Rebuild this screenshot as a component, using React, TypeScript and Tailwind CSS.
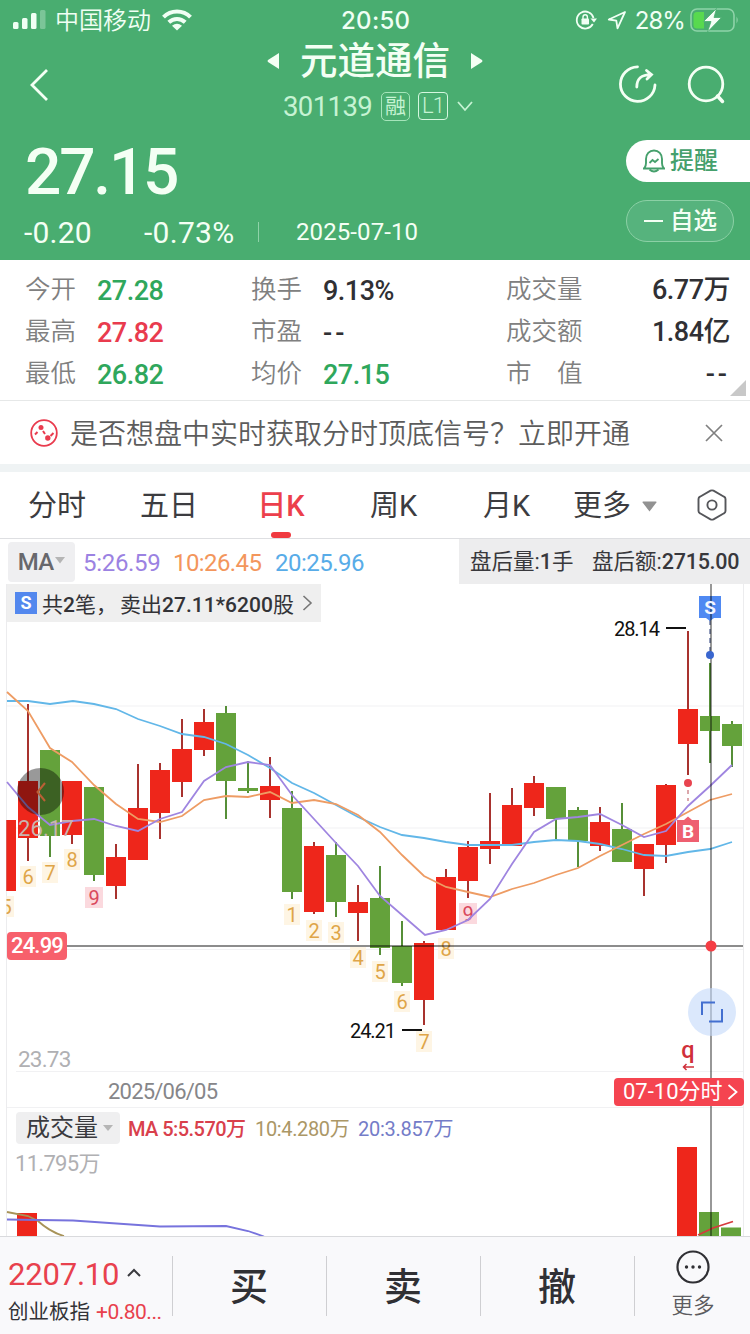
import { useState } from 'react';
import { clsx } from 'clsx';

type Candle = {
  x: number;
  top: number;
  bottom: number;
  high: number;
  low: number;
  up: boolean;
};

const UP = '#ee261b';
const DOWN = '#64a23b';

const candle = (
  x: number,
  top: number,
  bottom: number,
  high: number,
  low: number,
  up: boolean
): Candle => ({ x, top, bottom, high, low, up });

const candles: Candle[] = [
  candle(6, 820, 891, 820, 891, true),
  candle(28, 781, 838, 704, 861, true),
  candle(50, 750, 836, 750, 857, false),
  candle(72, 781, 835, 781, 844, true),
  candle(94, 787, 875, 787, 881, false),
  candle(116, 857, 886, 844, 899, true),
  candle(138, 808, 860, 764, 860, true),
  candle(160, 770, 813, 763, 839, true),
  candle(182, 749, 782, 719, 797, true),
  candle(204, 722, 750, 709, 756, true),
  candle(226, 713, 781, 706, 819, false),
  candle(248, 788, 791, 761, 793, false),
  candle(270, 786, 800, 757, 818, true),
  candle(292, 808, 892, 791, 899, false),
  candle(314, 846, 912, 842, 914, true),
  candle(336, 855, 902, 842, 917, false),
  candle(358, 902, 913, 885, 941, true),
  candle(380, 898, 948, 866, 955, false),
  candle(402, 946, 983, 921, 986, false),
  candle(424, 943, 1000, 941, 1025, true),
  candle(446, 877, 930, 869, 930, true),
  candle(468, 847, 881, 841, 898, true),
  candle(490, 841, 849, 793, 864, true),
  candle(512, 805, 846, 788, 846, true),
  candle(534, 783, 808, 776, 816, true),
  candle(556, 787, 819, 787, 839, false),
  candle(578, 810, 841, 807, 867, false),
  candle(600, 822, 846, 807, 851, true),
  candle(622, 829, 862, 803, 862, false),
  candle(644, 844, 869, 844, 896, true),
  candle(666, 785, 845, 784, 863, true),
  candle(688, 709, 744, 631, 775, true),
  candle(710, 716, 731, 663, 763, false),
  candle(732, 724, 746, 721, 767, false),
];

const ma5 =
  '7,782 28,807 50,825 72,821 94,819 116,826 138,831 160,819 182,812 204,781 226,767 248,762 270,765 292,795 314,819 336,843 358,866 380,896 402,915 425,935 446,930 468,920 490,899 512,864 534,832 556,819 578,817 600,814 622,825 644,837 666,831 688,806 710,786 732,765';
const ma10 =
  '7,692 28,711 50,748 72,762 94,785 116,804 138,819 160,822 182,816 204,800 226,796 248,797 270,792 292,803 314,800 336,804 358,815 380,832 402,855 424,876 446,887 468,892 490,897 512,889 534,883 556,875 578,868 600,856 622,845 644,834 666,824 688,812 710,800 732,794';
const ma20 =
  '7,701 28,701 50,704 73,701 94,704 116,709 138,719 160,726 182,734 204,737 226,744 248,755 270,768 292,783 314,793 336,805 358,817 380,827 402,835 424,838 446,842 468,845 490,845 512,845 534,842 556,840 578,841 600,844 622,849 644,855 666,856 688,852 710,849 732,842';

// nine-turn sequence marks under the candles
const turns = [
  { x: 6, y: 907, n: 5 },
  { x: 28, y: 877, n: 6 },
  { x: 50, y: 873, n: 7 },
  { x: 72, y: 860, n: 8 },
  { x: 94, y: 898, n: 9 },
  { x: 292, y: 915, n: 1 },
  { x: 314, y: 931, n: 2 },
  { x: 336, y: 933, n: 3 },
  { x: 358, y: 958, n: 4 },
  { x: 380, y: 972, n: 5 },
  { x: 402, y: 1002, n: 6 },
  { x: 424, y: 1042, n: 7 },
  { x: 446, y: 949, n: 8 },
  { x: 468, y: 914, n: 9 },
];

const tabs = [
  { label: '分时', width: 'w-[114px]' },
  { label: '五日', width: 'w-[110px]' },
  { label: '日K', width: 'w-[114px]' },
  { label: '周K', width: 'w-[111px]' },
  { label: '月K', width: 'w-[115px]' },
];

function StatusBar() {
  return (
    <div className="relative flex h-10 items-center px-3 font-['Inter','Noto_Sans_CJK_SC',sans-serif] text-[#f0fff4]">
      <svg width="34" height="20" viewBox="0 0 34 20" fill="currentColor">
        <rect x="1" y="12" width="5.500" height="7" rx="1.500" />
        <rect x="10" y="8" width="5.500" height="11" rx="1.500" />
        <rect x="19" y="3" width="5.500" height="16" rx="1.500" />
        <rect x="28" y="0" width="5.500" height="19" rx="1.500" opacity="0.300" />
      </svg>
      <span className="relative top-px ml-[9px] text-2xl font-[350]">中国移动</span>
      <svg className="ml-[10px]" width="32" height="24" viewBox="0 0 32 24" fill="none" stroke="currentColor" strokeWidth="4">
        <path d="M2.500 9.200C10 1.600 22 1.600 29.500 9.200" />
        <path d="M7.800 14.300C12.500 9.800 19.500 9.800 24.200 14.300" />
        <path d="M11 17.800Q16 13.500 21 17.800L16 22.500Z" fill="currentColor" stroke="none" />
      </svg>
      <span className="absolute left-[341px] top-[6px] text-[24px] leading-[29px] font-medium tracking-[0.300px]">20:50</span>
      <div className="ml-auto flex translate-x-[2px] items-center">
        <svg width="22" height="22" viewBox="0 0 22 22" fill="none" stroke="currentColor" strokeWidth="1.800">
          <path d="M17.800 15A8.500 8.500 0 1 1 18.500 9" />
          <path d="M15.500 9.500H22L19 13.500Z" fill="currentColor" stroke="none" />
          <rect x="6.500" y="9.500" width="7.500" height="6" rx="0.800" fill="currentColor" stroke="none" />
          <path d="M8 10V8a2.200 2.200 0 0 1 4.400 0v2" strokeWidth="1.400" />
        </svg>
        <svg className="ml-[10px]" width="20" height="20" viewBox="0 0 20 20" fill="none" stroke="currentColor" strokeWidth="1.800" strokeLinejoin="round">
          <path d="M18 2L1.800 9.500L9.300 10.700L10.500 18.300Z" />
        </svg>
        <span className="relative top-px ml-2 text-[24px] font-normal tracking-[-0.900px]">28%</span>
        <svg className="ml-[5px]" width="50" height="26" viewBox="0 0 50 26">
          <rect x="1" y="2" width="43" height="22" rx="6" fill="none" stroke="#8fd3a9" strokeWidth="1.600" />
          <path d="M7 5H14V21.500H7Q3.500 21.500 3.500 18V8.500Q3.500 5 7 5Z" fill="#58d94f" />
          <path d="M46.500 9.500Q49 13 46.500 16.500Z" fill="#8fd3a9" />
          <path d="M26.500 1.500L13.500 14.500H21L17.500 25L31.500 10.500H24Z" fill="#f5fff7" stroke="#49ad70" strokeWidth="0.800" />
        </svg>
      </div>
    </div>
  );
}

function Header() {
  return (
    <header className="h-[260px] bg-[#49ad70] text-[#f4fff4]">
      <StatusBar />
      <div className="flex h-[88px] items-start">
        <svg className="mt-[28px] ml-[28px]" width="22" height="34" viewBox="0 0 22 34" fill="none" stroke="currentColor" strokeWidth="2.800">
          <path d="M19 2L4 17L19 32" />
        </svg>
        <div className="ml-[210px] w-[230px]">
          <div className="flex h-[42px] items-center justify-center">
            <svg width="13" height="18" viewBox="0 0 13 18" fill="currentColor">
              <path d="M12 1V17L1 10Q0 9 1 8Z" />
            </svg>
            <h1 className="mx-[20px] text-[37.500px] leading-[42px] font-medium whitespace-nowrap">元道通信</h1>
            <svg width="13" height="18" viewBox="0 0 13 18" fill="currentColor">
              <path d="M1 1V17L12 10Q13 9 12 8Z" />
            </svg>
          </div>
          <div className="mt-[8px] ml-[23px] flex h-8 items-center text-[#c6f3d3]">
            <span className="relative top-px w-[89px] text-[27.500px] tracking-[-0.600px]">301139</span>
            <span className="ml-[9px] grid size-[29px] place-items-center rounded-[5px] border-[1.500px] border-[#a5e5ba] text-[21px] leading-none">
              融
            </span>
            <span className="ml-2 grid h-[28px] w-[30px] place-items-center rounded-[4px] border border-[#d5f7df] text-[22px] leading-none font-light tracking-[-1px]">
              L1
            </span>
            <svg className="ml-[8px]" width="18" height="12" viewBox="0 0 18 12" fill="none" stroke="currentColor" strokeWidth="1.800">
              <path d="M2 2L9 10L16 2" />
            </svg>
          </div>
        </div>
        <svg className="mt-[24px] ml-[128px]" width="42" height="42" viewBox="0 0 42 42" fill="none" stroke="currentColor" strokeWidth="2.800" strokeLinecap="round">
          <path d="M19.500 2.800A17.300 17.300 0 1 0 37 21" />
          <path d="M18.800 23C18.800 14.500 23 10.800 33 10.600M28.500 6.500L33.500 10.600L29 15" />
        </svg>
        <svg className="mt-[25px] ml-[27px]" width="40" height="42" viewBox="0 0 40 42" fill="none" stroke="currentColor" strokeWidth="2.800" strokeLinecap="round">
          <circle cx="19" cy="19" r="16.800" />
          <path d="M30.500 31L35.500 36.500" strokeWidth="3.500" />
        </svg>
      </div>
      <div className="flex justify-between">
        <div>
          <div className="mt-[15px] ml-[25px] h-[60px] text-[64px] leading-[60px] font-medium tracking-[-2.200px]">27.15</div>
          <div className="mt-[13px] flex h-8 items-center text-[30px]">
            <span className="ml-[24px] w-[120px] tracking-[0.200px]">-0.20</span>
            <span className="w-[114px] tracking-[0.300px]">-0.73%</span>
            <i className="h-5 w-px bg-[#8fd3a9]" />
            <span className="ml-[37px] text-2xl tracking-[0.100px]">2025-07-10</span>
          </div>
        </div>
        <div className="mt-[12px] w-[124px] text-2xl">
          <div className="flex h-[42px] items-center rounded-l-full bg-white pl-[16px] font-medium text-[#45a06c]">
            <svg width="24" height="24" viewBox="0 0 24 24" fill="none" stroke="currentColor" strokeWidth="1.900">
              <path d="M1 19.500H23M2.500 19Q4 17 4 14V10C4 5 7.300 1.500 12 1.500S20 5 20 10V14Q20 17 21.500 19" />
              <path d="M7.500 20.500Q12 24.500 16.500 20.500" />
              <path d="M7.500 14L10.500 11L13 13L16.500 10" strokeWidth="1.800" />
            </svg>
            <span className="ml-[4px]">提醒</span>
          </div>
          <div className="mt-[18px] flex h-[42px] w-[108px] items-center rounded-full border border-[#8bd0a5] bg-[#56b37d] pl-[17px] font-medium">
            <i className="h-[2px] w-[19px] bg-current" />
            <span className="relative top-px ml-[7px] text-[23.500px]">自选</span>
          </div>
        </div>
      </div>
    </header>
  );
}

interface StatProps {
  label: string;
  value: string;
  tone?: string;
}

// "--" stands for a missing value and is set wider than the digits
const spacing = (value: string) => (value === '--' ? 'tracking-[3px]' : 'tracking-[-0.500px]');

function Stat({ label, value, tone = 'text-[#303034]' }: StatProps) {
  return (
    <div className="flex h-[42px] items-center">
      <span className="w-[72px] text-[25.500px] font-[350] whitespace-pre text-[#808080]">{label}</span>
      <span className={clsx('relative top-px text-[27px] font-medium', spacing(value), tone)}>{value}</span>
    </div>
  );
}

function WideStat({ label, value }: StatProps) {
  return (
    <div className="flex h-[42px] items-center justify-between">
      <span className="text-[25.500px] font-[350] whitespace-pre text-[#808080]">{label}</span>
      <span className={clsx('text-[27px] font-medium text-[#303034]', spacing(value))}>{value}</span>
    </div>
  );
}

function Stats() {
  return (
    <section className="relative flex h-[141px] border-b border-[#e6e8e8] pt-[9px] leading-none">
      <div className="ml-[25px] w-[226px]">
        <Stat label="今开" value="27.28" tone="text-[#2fa75c]" />
        <Stat label="最高" value="27.82" tone="text-[#e93b4e]" />
        <Stat label="最低" value="26.82" tone="text-[#2fa75c]" />
      </div>
      <div className="w-[255px]">
        <Stat label="换手" value="9.13%" />
        <Stat label="市盈" value="--" />
        <Stat label="均价" value="27.15" tone="text-[#2fa75c]" />
      </div>
      <div className="w-[224px]">
        <WideStat label="成交量" value="6.77万" />
        <WideStat label="成交额" value="1.84亿" />
        <WideStat label="市　值" value="--" />
      </div>
      <svg className="absolute right-[4px] bottom-[4px]" width="16" height="16" viewBox="0 0 16 16">
        <path d="M16 0V16H0Z" fill="#c8c8c8" />
      </svg>
    </section>
  );
}

function Banner() {
  return (
    <section className="flex h-[63px] items-center text-[#5c5c5c]">
      <svg className="ml-[30px]" width="28" height="28" viewBox="0 0 28 28" fill="none" stroke="#e93b4e" strokeWidth="1.800">
        <circle cx="14" cy="14" r="12.800" />
        <path d="M5 15.500L7.500 13M13 12L15 15M20.500 17L23.500 14" strokeWidth="2" />
        <circle cx="11" cy="8.500" r="2.500" fill="#e93b4e" stroke="none" />
        <circle cx="17.800" cy="19" r="2.700" fill="#e93b4e" stroke="none" />
      </svg>
      <span className="relative top-[2px] ml-[12px] text-[28px] leading-none font-[350] whitespace-nowrap">
        是否想盘中实时获取分时顶底信号？立即开通
      </span>
      <svg className="mr-[27px] ml-auto" width="18" height="18" viewBox="0 0 18 18" stroke="#808080" strokeWidth="1.700">
        <path d="M1 1L17 17M17 1L1 17" />
      </svg>
    </section>
  );
}

function Tabs() {
  const [active, setActive] = useState('日K');
  return (
    <nav className="flex h-[67px] items-stretch border-b border-[#dedfe2] text-[29px] leading-none text-[#3c3c40]">
      {tabs.map(({ label, width }) => (
        <button
          key={label}
          onClick={() => setActive(label)}
          className={clsx('relative flex items-center justify-center pt-[3px]', width, active === label && 'font-medium text-[#ec3f4c]')}
        >
          {label}
          {active === label && <i className="absolute bottom-0 h-[6px] w-5 rounded-full bg-[#f03a40]" />}
        </button>
      ))}
      <button className="ml-[9px] flex items-center pt-[3px]">
        更多
        <svg className="ml-[11px]" width="15" height="11" viewBox="0 0 15 11" fill="#929292">
          <path d="M1 0.500H14Q15 1 14 2L7.500 10.500L1 2Q0 1 1 0.500Z" />
        </svg>
      </button>
      <svg className="mr-[23px] ml-auto self-center" width="30" height="32" viewBox="0 0 30 32" fill="none" stroke="#55565a" strokeWidth="1.900">
        <path d="M13.500 1.700Q15 1 16.500 1.700L27 7.700Q28.500 8.500 28.500 10V22Q28.500 23.500 27 24.300L16.500 30.300Q15 31 13.500 30.300L3 24.300Q1.500 23.500 1.500 22V10Q1.500 8.500 3 7.700Z" />
        <circle cx="15" cy="16" r="4.600" />
      </svg>
    </nav>
  );
}

function Averages() {
  return (
    <div className="flex h-[45px] items-center text-2xl leading-none">
      <button className="ml-2 flex h-[40px] w-[67px] items-center justify-center rounded-[4px] bg-[#efeff1] font-medium tracking-[-0.800px] text-[#68686c]">
        MA
        <svg className="mb-[3px] ml-[2px]" width="10" height="7" viewBox="0 0 10 7" fill="#b5b5b5">
          <path d="M0 0H10L5 6.500Z" />
        </svg>
      </button>
      <span className="relative top-px ml-[8px] w-[90px] tracking-[-0.300px] text-[#9b82e2]">5:26.59</span>
      <span className="relative top-px w-[102px] tracking-[-0.600px] text-[#f3965c]">10:26.45</span>
      <span className="relative top-px tracking-[-0.500px] text-[#58ace8]">20:25.96</span>
      <div className="ml-auto flex h-[45px] w-[291px] items-center bg-[#ededee] text-[21.500px] whitespace-pre text-[#38383c]">
        <span className="ml-[11px] w-[122px]">
          盘后量:<span className="font-medium">1</span>手
        </span>
        <span>
          盘后额:<span className="font-medium tracking-[-0.250px]">2715.00</span>
        </span>
      </div>
    </div>
  );
}

function KLineChart() {
  return (
    <section className="relative h-[524px]">
      <svg
        className="block font-['Roboto','Noto_Sans_CJK_SC',sans-serif]"
        width="750"
        height="524"
        viewBox="0 584 750 524"
        fill="none"
      >
        <defs>
          <clipPath id="plot">
            <rect x="6.500" y="584" width="737" height="524" />
          </clipPath>
        </defs>
        <path d="M6.500 584V1108M743.500 584V1108" stroke="#ececee" />
        <path d="M7 706H743M7 828H743M7 949.500H743M16 1071.500H743M7 1107.500H743" stroke="#f1f1f3" />
        <g clipPath="url(#plot)">
          {candles.map((c) => (
            <g key={c.x}>
              <rect x={c.x - 1} y={c.high} width="2" height={c.low - c.high} fill={c.up ? '#a8322e' : '#568f38'} />
              <rect x={c.x - 10} y={c.top} width="20" height={c.bottom - c.top} fill={c.up ? UP : DOWN} />
            </g>
          ))}
          {turns.map((t) => (
            <g key={t.x}>
              <rect x={t.x - (t.n === 9 ? 9 : 8)} y={t.y - 11} width={t.n === 9 ? 18 : 16} height="21" fill={t.n === 9 ? '#fbd9de' : '#fef5e4'} />
              <text x={t.x} y={t.y + 7} textAnchor="middle" fontSize="20" fill={t.n === 9 ? '#d9485c' : '#dfa548'}>
                {t.n}
              </text>
            </g>
          ))}
        </g>
        <polyline points={ma20} stroke="#62b7e8" strokeWidth="1.800" />
        <polyline points={ma10} stroke="#ee9c64" strokeWidth="1.800" />
        <polyline points={ma5} stroke="#9f85e0" strokeWidth="1.800" />
        <text x="18" y="1067" fontSize="22.500" letterSpacing="-0.800" fill="#b0b0b3">23.73</text>
        <text x="108" y="1099" fontSize="22" fill="#868689" textLength="110">2025/06/05</text>

        {/* extremes */}
        <text x="614" y="636" fontSize="20" fill="#111" textLength="46">28.14</text>
        <path d="M666 628H686" stroke="#111" strokeWidth="2" />
        <text x="350" y="1038" fontSize="20" fill="#111" textLength="46">24.21</text>
        <path d="M402 1030H422" stroke="#111" strokeWidth="2" />

        {/* buy and sell marks */}
        <path d="M710 620V652" stroke="#6f7ea6" strokeWidth="1.500" strokeDasharray="5 4" />
        <path d="M688 790V801" stroke="#d08a90" strokeWidth="1.500" strokeDasharray="4 4" />
        <circle cx="688" cy="783" r="4" fill="#e8444f" />
        <path d="M699 596H721V618H714L710 621L706 618H699Z" fill="#4f89f2" />
        <path d="M677 820H684L688 816.500L692 820H699V842H677Z" fill="#ee5f70" />
        <text x="688" y="838" textAnchor="middle" fontSize="19" fontWeight="700" fill="#fff">B</text>

        {/* crosshair */}
        <path d="M67 946H743M711 584V1108" stroke="#000" strokeOpacity="0.450" strokeWidth="1.800" />
        <text x="710" y="614" textAnchor="middle" fontSize="19" fontWeight="700" fill="#f3f6ff">S</text>
        <circle cx="710" cy="655" r="4" fill="#3a66cf" />
        <circle cx="711" cy="946" r="5.500" fill="#f53d44" />
        <text x="688" y="1058" textAnchor="middle" fontSize="23.500" fontWeight="500" fill="#d0303a">q</text>
        <path d="M694 1067H683M686.500 1064L683.500 1067L686.500 1070" stroke="#d0303a" strokeWidth="1.500" />
      </svg>

      <div className="absolute top-0 left-[7px] flex h-[38px] w-[314px] items-center bg-[#efefef] pl-2 text-[21px] leading-none whitespace-nowrap text-[#333337]">
        <b className="grid size-[22px] shrink-0 place-items-center bg-[#5388ee] text-[18px] text-white">S</b>
        <span className="relative top-[2px] ml-[5px] w-[254px]">
          共<span className="font-medium">2</span>笔，
          <span className="ml-[3px]">卖出</span>
          <span className="font-medium tracking-[0.050px]">27.11*6200</span>股
        </span>
        <svg className="ml-[6px]" width="11" height="18" viewBox="0 0 11 18" fill="none" stroke="#777" strokeWidth="1.600">
          <path d="M1.500 2L9 9L1.500 16" />
        </svg>
      </div>
      <button className="absolute top-[184px] left-[17px] grid size-[47px] place-items-center rounded-full bg-black/40">
        <svg width="10" height="22" viewBox="0 0 10 22" fill="none" strokeWidth="2">
          <path d="M9 2L1.500 11L9 20" stroke="#bb5f35" />
        </svg>
      </button>
      <span className="absolute top-[234px] left-[18px] text-[22px] leading-[22px] tracking-[0.100px] text-[#c9b4b0]">26.17</span>
      <div className="absolute top-[348px] left-[7px] grid h-[28px] w-[60px] place-items-center rounded-[4px] bg-[#f7606c] text-[22px] leading-none font-medium tracking-[-0.800px] text-white">
        24.99
      </div>
      <button className="absolute top-[404px] left-[688px] size-[48px] rounded-full bg-[#c3d9fa]/60">
        <svg width="48" height="48" viewBox="0 0 48 48" fill="none" stroke="#436fd0" strokeWidth="2">
          <path d="M14 27V14.500H27M34 21V33.500H21" />
        </svg>
      </button>
      <button className="absolute top-[494px] left-[614px] flex h-[28px] w-[130px] items-center rounded-[4px] bg-[#f54450] pl-[9px] text-[22px] leading-none whitespace-nowrap text-white">
        07-10分时
        <svg className="ml-[4px]" width="11" height="18" viewBox="0 0 11 18" fill="none" stroke="currentColor" strokeWidth="1.800">
          <path d="M1.500 2L9.500 9L1.500 16" />
        </svg>
      </button>
    </section>
  );
}

function VolumeChart() {
  return (
    <section className="relative h-[128px] leading-none">
      <svg className="absolute inset-0" width="750" height="128" viewBox="0 1108 750 128" fill="none">
        <path d="M6.500 1108V1236M743.500 1108V1236" stroke="#ececee" />
        <rect x="17" y="1213" width="20" height="23" fill={UP} />
        <rect x="677" y="1147" width="20" height="89" fill={UP} />
        <rect x="699" y="1212" width="20" height="24" fill={DOWN} />
        <rect x="721" y="1227.500" width="20" height="9" fill={DOWN} />
        <path d="M7 1212L28 1216L38 1221Q50 1232 64 1236" stroke="#a89358" strokeWidth="1.800" />
        <path d="M7 1219.500L73 1220.500L160 1226.500L226 1226L248 1231L264 1236.500" stroke="#7773dd" strokeWidth="1.800" />
        <path d="M698 1235L713 1228L733 1221.500" stroke="#d63a3c" strokeWidth="1.800" />
        <path d="M711 1108V1236" stroke="#000" strokeOpacity="0.450" strokeWidth="1.800" />
      </svg>
      <div className="relative flex items-center pt-[4px] pl-[16px] text-[20px] whitespace-nowrap">
        <button className="flex h-[32px] w-[104px] items-center rounded-[4px] bg-[#efeff0] pl-[10px] text-2xl text-[#3a3a3e]">
          成交量
          <svg className="ml-[5px]" width="10" height="6" viewBox="0 0 10 6" fill="#b5b5b5">
            <path d="M0 0H10L5 6Z" />
          </svg>
        </button>
        <span className="relative top-px ml-[8px] w-[127px] font-medium tracking-[-0.550px] text-[#d9404c]">MA 5:5.570万</span>
        <span className="relative top-px w-[103px] tracking-[-0.350px] text-[#ab9766]">10:4.280万</span>
        <span className="relative top-px tracking-[-0.250px] text-[#747cc8]">20:3.857万</span>
      </div>
      <div className="relative mt-[9px] pl-[15px] text-[22px] tracking-[-0.700px] text-[#b0b0b3]">11.795万</div>
    </section>
  );
}

function BottomBar() {
  return (
    <footer className="flex h-[98px] border-t border-[#d9dadd] bg-[#f9f9fb] leading-none">
      <div className="relative w-[172px] pl-2">
        <div className="mt-[22px] flex h-[30px] items-center text-[31px] tracking-[-0.200px] text-[#e8414d]">
          2207.10
          <svg className="mb-[3px] ml-[8px]" width="14" height="9" viewBox="0 0 14 9" fill="none" stroke="#3a3a3e" strokeWidth="2">
            <path d="M1 8L7 2L13 8" />
          </svg>
        </div>
        <div className="mt-[11px] flex h-6 items-center whitespace-nowrap text-[#333337]">
          <span className="text-[20.500px]">创业板指</span>
          <span className="ml-[6px] text-[21px] tracking-[-0.500px] text-[#e8414d]">+0.80...</span>
        </div>
      </div>
      {['买', '卖', '撤'].map((action) => (
        <button key={action} className="relative flex w-[154px] items-center justify-center pt-[2px] text-[38px] font-medium text-[#303034]">
          <i className="absolute top-[19px] left-0 h-[60px] w-px bg-[#cfcfd2]" />
          {action}
        </button>
      ))}
      <button className="relative flex flex-1 flex-col items-center pt-[13px]">
        <i className="absolute top-[19px] left-0 h-[60px] w-px bg-[#cfcfd2]" />
        <svg className="ml-[2px]" width="34" height="34" viewBox="0 0 34 34" fill="#303034">
          <circle cx="17" cy="17" r="15.500" fill="none" stroke="#303034" strokeWidth="2.200" />
          <circle cx="10.500" cy="17" r="1.700" />
          <circle cx="17" cy="17" r="1.700" />
          <circle cx="23.500" cy="17" r="1.700" />
        </svg>
        <span className="mt-[11px] ml-[2px] text-[21.500px] font-[350] text-[#5c5c60]">更多</span>
      </button>
    </footer>
  );
}

export default function App() {
  return (
    <main className="h-[1334px] w-[750px] overflow-hidden bg-white font-['Roboto','Noto_Sans_CJK_SC',sans-serif]">
      <Header />
      <Stats />
      <Banner />
      <div className="h-2 bg-[#eff3f4]" />
      <Tabs />
      <Averages />
      <KLineChart />
      <VolumeChart />
      <BottomBar />
    </main>
  );
}
